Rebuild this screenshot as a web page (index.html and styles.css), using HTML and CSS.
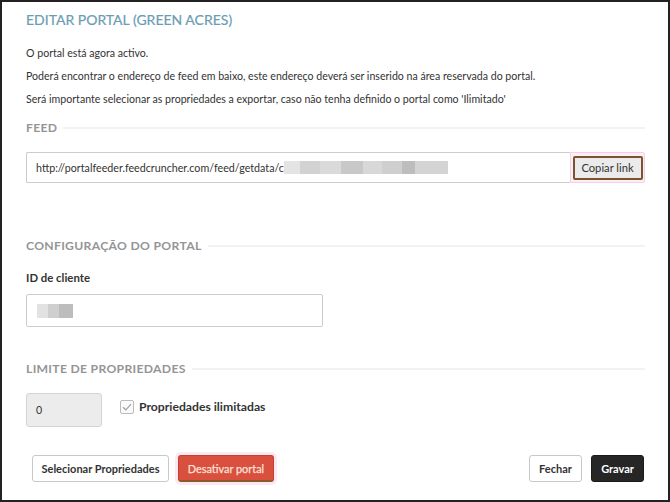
FILE: index.html
```html
<!DOCTYPE html>
<html lang="pt">
<head>
<meta charset="utf-8">
<title>Editar portal</title>
<link rel="stylesheet" href="styles.css">
</head>
<body>
<div class="modal">
  <h1 class="title">EDITAR PORTAL (GREEN ACRES)</h1>
  <p class="intro">O portal está agora activo.</p>
  <p class="intro">Poderá encontrar o endereço de feed em baixo, este endereço deverá ser inserido na área reservada do portal.</p>
  <p class="intro">Será importante selecionar as propriedades a exportar, caso não tenha definido o portal como 'Ilimitado'</p>

  <div class="section-head feed-head"><span>FEED</span><i class="rule"></i></div>
  <div class="input-group">
    <div class="feed-input">http://portalfeeder.feedcruncher.com/feed/getdata/c<span class="blur blur-url"></span></div>
    <div class="btn-wrap"><button class="btn-copy">Copiar link</button></div>
  </div>

  <div class="section-head config-head"><span>CONFIGURAÇÃO DO PORTAL</span><i class="rule"></i></div>
  <div class="field-label">ID de cliente</div>
  <div class="text-input"><span class="blur blur-id"></span></div>

  <div class="section-head limit-head"><span>LIMITE DE PROPRIEDADES</span><i class="rule"></i></div>
  <div class="limit-row">
    <div class="num-input">0</div>
    <label class="check">
      <span class="box"><svg width="10" height="8" viewBox="0 0 10 8"><path d="M1 4.2 L3.8 6.8 L9 1.2" fill="none" stroke="#9aa3ad" stroke-width="1.2"/></svg></span>
      Propriedades ilimitadas
    </label>
  </div>

  <div class="footer">
    <div class="footer-left">
      <button class="btn btn-default btn-select">Selecionar Propriedades</button>
      <span class="danger-wrap"><button class="btn btn-danger">Desativar portal</button></span>
    </div>
    <div class="footer-right">
      <button class="btn btn-default btn-small">Fechar</button>
      <button class="btn btn-dark">Gravar</button>
    </div>
  </div>
</div>
</body>
</html>
```

FILE: styles.css
```css
* { box-sizing: border-box; }
html, body { margin: 0; padding: 0; background: #fff; }
body { font-family: Lato, "Open Sans", "Liberation Sans", sans-serif; color: #333; font-size: 10.6px; }

.modal {
  width: 670px;
  height: 502px;
  border: 2px solid #222;
  padding: 8px 23px 0 24px;
}

.title {
  margin: 0 0 14px 0;
  font-size: 14px;
  line-height: 20px;
  font-weight: 400;
  color: #6a9cb3;
  -webkit-text-stroke: 0.2px #6a9cb3;
}

.intro {
  margin: 0 0 5px 0;
  line-height: 18px;
  font-size: 10.6px;
}

.section-head {
  display: flex;
  align-items: center;
  gap: 6px;
  font-size: 12.2px;
  font-weight: 700;
  color: #959595;
  letter-spacing: 0.3px;
  line-height: 16px;
}
.section-head .rule { flex: 1; height: 2px; background: #f2f2f2; }
.feed-head { margin-top: 12px; }
.config-head { margin-top: 55px; }
.limit-head { margin-top: 34px; }

.input-group {
  display: flex;
  margin-top: 16px;
  height: 31px;
}
.feed-input {
  flex: 1;
  border: 1px solid #ccc;
  border-right: none;
  border-radius: 2px 0 0 2px;
  padding: 0 9px;
  display: flex;
  align-items: center;
  font-size: 10.7px;
  color: #333;
}
.blur {
  display: inline-block;
  background:
    linear-gradient(90deg, #e4e4e4 0 10%, #d2d2d2 10% 22%, #dadada 22% 35%, #c8c8c8 35% 48%, #d8d8d8 48% 60%, #cfcfcf 60% 72%, #bdbdbd 72% 80%, #d4d4d4 80% 100%);
}
.blur-url { width: 164px; height: 13px; }
.blur-id {
  width: 36px; height: 14px;
  background: linear-gradient(90deg, #e2e2e2 0 30%, #cfcfcf 30% 60%, #bdbdbd 60% 100%);
}

.btn-wrap {
  width: 75px;
  border: 1px solid #f6cfe0;
  background: #fdeef5;
  display: flex;
  align-items: center;
  justify-content: center;
  border-radius: 0 2px 2px 0;
}
.btn-copy {
  font-family: inherit;
  font-size: 11.2px;
  color: #333;
  background: #ebebeb;
  border: 2px solid #7a5332;
  border-radius: 2px;
  width: 70px;
  height: 24px;
  padding: 0;
}

.field-label {
  margin-top: 16px;
  font-weight: 700;
  font-size: 11.4px;
  line-height: 16px;
}
.text-input {
  margin-top: 8px;
  width: 297px;
  height: 33px;
  border: 1px solid #ccc;
  border-radius: 2px;
  display: flex;
  align-items: center;
  padding-left: 10px;
}

.limit-row {
  margin-top: 16px;
  display: flex;
  align-items: flex-start;
  gap: 18px;
}
.num-input {
  width: 76px;
  height: 34px;
  background: #ececec;
  border: 1px solid #d4d4d4;
  border-radius: 3px;
  display: flex;
  align-items: center;
  padding-left: 9px;
  font-size: 10.6px;
}
.check {
  display: flex;
  align-items: center;
  gap: 5px;
  margin-top: 6px;
  font-weight: 700;
  font-size: 12.2px;
}
.box {
  width: 14px;
  height: 14px;
  border: 1px solid #bbb;
  border-radius: 2px;
  display: flex;
  align-items: center;
  justify-content: center;
  background: #fafafa;
}

.footer {
  margin-top: 28px;
  display: flex;
  justify-content: space-between;
  padding-left: 6px;
  padding-right: 1px;
}
.footer-left, .footer-right { display: flex; gap: 9px; align-items: center; }
.btn {
  font-family: inherit;
  font-size: 11px;
  font-weight: 700;
  height: 27px;
  border-radius: 3px;
  padding: 0;
  white-space: nowrap;
}
.btn-default { background: #fff; color: #333; border: 1px solid #c8c8c8; }
.btn-select { width: 137px; }
.btn-small { width: 53px; }
.btn-danger {
  background: #d9503e;
  color: #fbe0d8;
  border: 1px solid #c24232;
  border-bottom: 2px solid #8a5a2a;
  width: 96px;
  font-weight: 400;
  font-size: 10.9px;
  -webkit-text-stroke: 0.25px #fbe0d8;
}
.danger-wrap { display: inline-flex; box-shadow: 0 0 0 3px #fde8f2; border-radius: 3px; }
.btn-dark { background: #262626; color: #fff; border: 1px solid #1a1a1a; width: 53px; }
```
